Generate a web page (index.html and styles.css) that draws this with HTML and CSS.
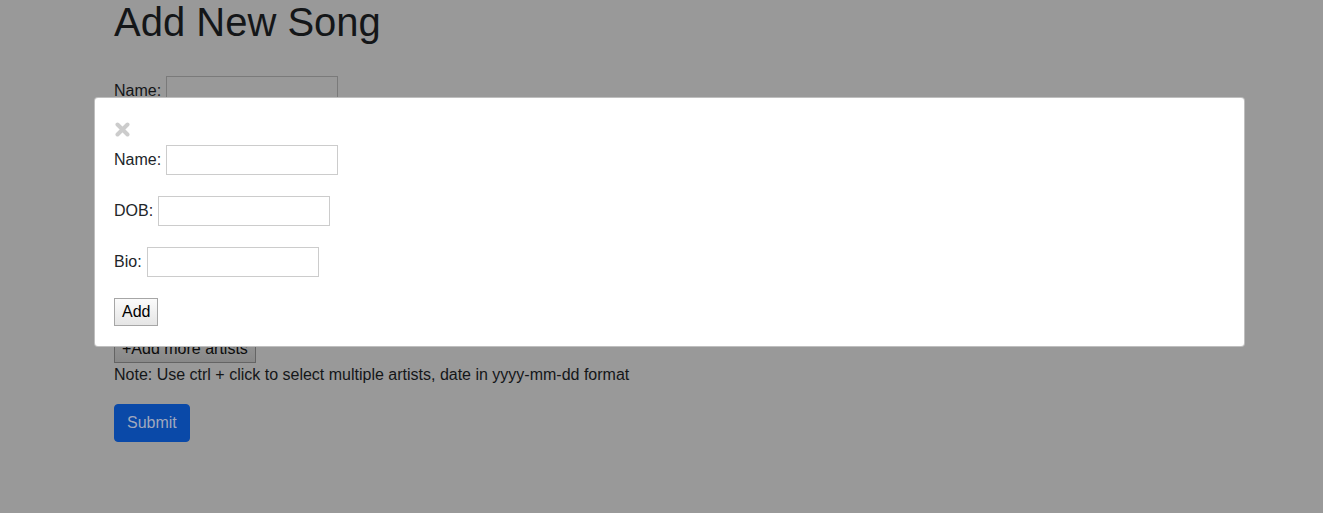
FILE: index.html
```html
<!DOCTYPE html>
<html lang="en">
<head>
<meta charset="utf-8">
<title>Add New Song</title>
<link rel="stylesheet" href="styles.css">
</head>
<body>
<div class="page">
  <h1 class="title">Add New Song</h1>
  <form class="song-form">
    <div class="row"><label>Name:</label><input class="field" type="text"></div>
    <div class="row"><input class="field" type="text" aria-label="Release date"></div>
    <div class="row"><input class="field" type="text" aria-label="Genre"></div>
    <div class="row"><select class="artists" multiple aria-label="Artists"></select></div>
    <button type="button" class="plain-btn dim">+Add more artists</button>
    <p class="note">Note: Use ctrl + click to select multiple artists, date in yyyy-mm-dd format</p>
    <button type="button" class="submit-btn">Submit</button>
  </form>
</div>
<div class="modal">
  <svg class="close" width="15" height="15" viewBox="0 0 15 15" aria-label="close">
    <path d="M2.5 2.5 L12.5 12.5 M12.5 2.5 L2.5 12.5" stroke="#cccccc" stroke-width="4" stroke-linecap="round"/>
  </svg>
  <div class="row"><label>Name:</label><input class="field light" type="text"></div>
  <div class="row"><label>DOB:</label><input class="field light" type="text"></div>
  <div class="row"><label>Bio:</label><input class="field light" type="text"></div>
  <button type="button" class="plain-btn">Add</button>
</div>
</body>
</html>
```
FILE: styles.css
```css
html, body {
  margin: 0;
  padding: 0;
}
body {
  /* page is dimmed behind the modal dialog */
  background: #999999;
  font-family: "Liberation Sans", Arial, Helvetica, sans-serif;
  font-size: 16px;
  line-height: 1.5;
  color: #141618;
  overflow: hidden;
}
.page {
  padding-left: 114px;
}
.title {
  font-size: 40px;
  font-weight: 400;
  line-height: 1.2;
  margin: -2px 0 30px;
}
.song-form {
  display: flex;
  flex-direction: column;
  align-items: flex-start;
}
.row {
  display: flex;
  align-items: center;
  gap: 5px;
  margin-bottom: 21px;
}
.field {
  box-sizing: border-box;
  width: 172px;
  height: 30px;
  border: 1px solid #7a7a7a;
  border-radius: 0;
  padding: 2px 4px;
  font: inherit;
  background: transparent;
}
.field.light {
  border-color: #cccccc;
  background: #ffffff;
}
.artists {
  box-sizing: border-box;
  width: 172px;
  height: 85px;
  border: 1px solid #7a7a7a;
  background: transparent;
  font: inherit;
}
.plain-btn {
  font: inherit;
  line-height: 24px;
  color: #000;
  padding: 1px 7px;
  border: 1px solid #a6a6a6;
  border-radius: 0;
  background: linear-gradient(#fbfbfb, #e5e5e5);
}
.plain-btn.dim {
  color: #0c0c0c;
  border-color: #646464;
  background: linear-gradient(#979797, #898989);
}
.note {
  margin: 0 0 17px;
}
.submit-btn {
  font: inherit;
  color: #a0a8bd;
  background: #0a49a8;
  border: 1px solid #0a49a8;
  border-radius: 4px;
  padding: 6px 12px;
  line-height: 24px;
}
.modal {
  position: absolute;
  top: 97px;
  left: 94px;
  width: 1151px;
  box-sizing: border-box;
  background: #fff;
  color: #212529;
  border: 1px solid rgba(0, 0, 0, 0.25);
  border-radius: 4px;
  padding: 24px 19px 20px;
  display: flex;
  flex-direction: column;
  align-items: flex-start;
}
.close {
  display: block;
  margin: 0 0 8px 1px;
}
```
